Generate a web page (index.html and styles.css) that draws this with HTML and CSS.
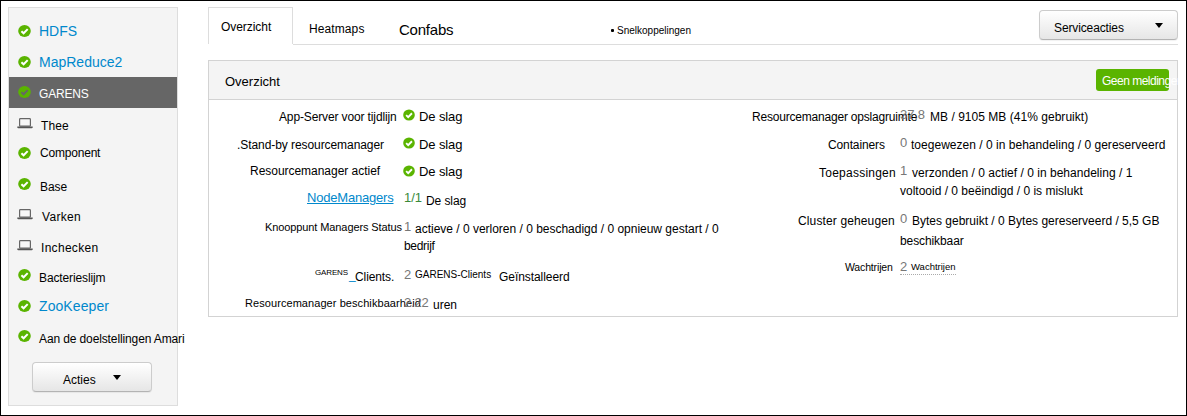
FILE: index.html
```html
<!DOCTYPE html>
<html lang="nl">
<head>
<meta charset="utf-8">
<title>Overzicht</title>
<link rel="stylesheet" href="styles.css">
</head>
<body>
<svg class="defs" aria-hidden="true">
  <symbol id="ok" viewBox="0 0 13 12">
    <ellipse cx="6.5" cy="6" rx="6.3" ry="6" fill="currentColor"/>
    <path class="tick" d="M3.4 6.2 5.6 8.3 9.7 4.1" fill="none" stroke-width="2"/>
  </symbol>
  <symbol id="laptop" viewBox="0 0 16 11">
    <rect x="2.6" y=".6" width="10.8" height="7.6" rx=".8" fill="#f7f7f7" stroke="#666" stroke-width="1.2"/>
    <path d="M.3 8.6H15.7V9.4Q15.7 10.2 14.6 10.2H1.4Q.3 10.2.3 9.4Z" fill="#555"/>
  </symbol>
</svg>
<div class="page">
  <aside class="sidebar">
    <ul class="services">
      <li class="link"><svg class="ok"><use href="#ok"/></svg><span class="hdfs">HDFS</span></li>
      <li class="link"><svg class="ok"><use href="#ok"/></svg><span class="mapreduce">MapReduce2</span></li>
      <li class="active"><svg class="ok"><use href="#ok"/></svg><span class="garens">GARENS</span></li>
      <li><svg class="laptop"><use href="#laptop"/></svg><span class="thee">Thee</span></li>
      <li><svg class="ok"><use href="#ok"/></svg><span class="component">Component</span></li>
      <li><svg class="ok"><use href="#ok"/></svg><span class="base">Base</span></li>
      <li><svg class="laptop"><use href="#laptop"/></svg><span class="varken">Varken</span></li>
      <li><svg class="laptop"><use href="#laptop"/></svg><span class="inchecken">Inchecken</span></li>
      <li><svg class="ok"><use href="#ok"/></svg><span class="slijm">Bacterieslijm</span></li>
      <li class="link"><svg class="ok"><use href="#ok"/></svg><span class="zoo">ZooKeeper</span></li>
      <li><svg class="ok"><use href="#ok"/></svg><span class="amari">Aan de doelstellingen Amari</span></li>
    </ul>
    <button class="btn actions"><span>Acties</span><i class="caret"></i></button>
  </aside>
  <main class="main">
    <nav class="tabs">
      <a class="tab current">Overzicht</a>
      <div class="tab-rest">
        <a class="heatmaps">Heatmaps</a>
        <a class="confabs">Confabs</a>
        <span class="bullet"></span>
        <a class="quick">Snelkoppelingen</a>
        <button class="btn service"><span>Serviceacties</span><i class="caret"></i></button>
      </div>
    </nav>
    <section class="panel">
      <header class="panel-head"><h1>Overzicht</h1><span class="badge">Geen meldingen</span></header>
      <div class="columns">
        <div class="left">
          <div class="row timeline"><span class="label">App-Server voor tijdlijn</span><span class="value"><svg class="ok"><use href="#ok"/></svg><b>De slag</b></span></div>
          <div class="row standby"><span class="label">.Stand-by resourcemanager</span><span class="value"><svg class="ok"><use href="#ok"/></svg><b>De slag</b></span></div>
          <div class="row rmactive"><span class="label">Resourcemanager actief</span><span class="value"><svg class="ok"><use href="#ok"/></svg><b>De slag</b></span></div>
          <div class="row nodes"><a class="label">NodeManagers</a><span class="value"><em>1/1</em><b>De slag</b></span></div>
          <div class="row nodestatus"><span class="label">Knooppunt Managers Status</span><div><span class="value"><em>1</em><b>actieve / 0 verloren / 0 beschadigd / 0 opnieuw gestart / 0</b></span><span class="more">bedrijf</span></div></div>
          <div class="row clients"><span class="label"><small>GARENS</small><u>_</u><b>Clients.</b></span><span class="value"><em>2</em><b class="name">GARENS-Clients</b><b>Geïnstalleerd</b></span></div>
          <div class="row uptime"><span class="label">Resourcemanager beschikbaarheid</span><span class="value"><em>2.22</em><b>uren</b></span></div>
        </div>
        <div class="right">
          <div class="row heap"><span class="label">Resourcemanager opslagruimte</span><span class="value"><em>37.8</em><b>MB / 9105 MB (41% gebruikt)</b></span></div>
          <div class="row containers"><span class="label">Containers</span><span class="value"><em>0</em><b>toegewezen / 0 in behandeling / 0 gereserveerd</b></span></div>
          <div class="row apps"><span class="label">Toepassingen</span><div><span class="value"><em>1</em><b>verzonden / 0 actief / 0 in behandeling / 1</b></span><span class="more">voltooid / 0 beëindigd / 0 is mislukt</span></div></div>
          <div class="row memory"><span class="label">Cluster geheugen</span><div><span class="value"><em>0</em><b>Bytes gebruikt / 0 Bytes gereserveerd / 5,5 GB</b></span><span class="more">beschikbaar</span></div></div>
          <div class="row queues"><span class="label">Wachtrijen</span><span class="value"><em>2</em><b>Wachtrijen</b></span></div>
        </div>
      </div>
    </section>
  </main>
</div>
</body>
</html>
```
FILE: styles.css
```css
* { box-sizing: border-box; }
body { margin: 0; background: #fff; color: #000; font: 12px/16px "Liberation Sans", Arial, sans-serif; }
b, em, i, u { font-weight: normal; font-style: normal; }
.defs { display: none; }
.page { display: flex; align-items: flex-start; width: 1187px; height: 416px; padding: 6px 8px 0 7px; border: 1px solid #000; overflow: hidden; white-space: nowrap; }

/* Status icons */
svg { flex: none; display: block; }
.ok { width: 13px; height: 12px; color: #5ab400; --tick: #fff; }
.tick { stroke: var(--tick); }
.laptop { width: 16px; height: 11px; }

/* Sidebar */
.sidebar { flex: none; width: 170px; height: 399px; padding-top: 8px; background: #f4f4f4; border: 1px solid #ddd; }
.services { list-style: none; margin: 0; padding: 0; }
.services li { display: flex; align-items: flex-start; height: 31px; padding: 9px 0 0 9px; }
.services li:nth-child(even) { height: 30px; }
.services .ok { margin-right: 8px; }
.services .laptop { margin: 1px 6px 0 -1px; }
.services span { margin-top: 1px; }
.services .link span { margin-top: -2px; font-size: 14px; color: #0088cc; }
.services .active { background: #666; color: #fff; }
.active .ok { --tick: #666; }
.services .garens { margin-top: 0; letter-spacing: -.2px; }
.mapreduce { letter-spacing: 0; }
.services .zoo { letter-spacing: .08px; }
.services .thee { margin-left: 2px; letter-spacing: .1px; }
.services .component { margin: -2px 0 0 1px; letter-spacing: -.2px; }
.services .base { margin-left: 1px; letter-spacing: -.1px; }
.services .varken { margin-left: 3px; letter-spacing: .3px; }
.services .inchecken { margin-left: 2px; letter-spacing: .3px; }
.slijm, .amari { letter-spacing: -.12px; }

/* Buttons */
.btn { display: flex; align-items: flex-start; height: 30px; padding: 0; border: 1px solid #ccc; border-bottom-color: #b3b3b3; border-radius: 4px; background: linear-gradient(#fff, #e6e6e6); box-shadow: 0 1px 1px rgba(0,0,0,.06); color: #000; font: inherit; }
.caret { border: 4.5px solid transparent; border-width: 5px 4px 0; border-top-color: #000; }
.actions { width: 120px; margin: 10px 0 0 23px; padding: 9px 0 0 30px; }
.actions .caret { margin: 3px 0 0 17px; }
.service { width: 139px; height: 30px; margin: 3px 0 0 348px; padding: 9px 0 0 14px; letter-spacing: -.12px; }
.service .caret { margin: 3px 0 0 31px; }

/* Tabs */
.main { width: 970px; margin-left: 30px; }
.tabs { display: flex; height: 38px; }
.current { width: 85px; height: 37px; padding: 11px 0 0 12px; border: 1px solid #ddd; border-bottom: 0; letter-spacing: -.05px; }
.tab-rest { display: flex; align-items: flex-start; flex: 1; height: 38px; border-bottom: 1px solid #ddd; }
.heatmaps { margin: 14px 0 0 16px; width: 90px; letter-spacing: .1px; }
.confabs { margin-top: 15px; width: 212px; font-size: 15px; letter-spacing: -.23px; }
.bullet { width: 3px; height: 3px; margin-top: 22px; background: #000; border-radius: 1px; }
.quick { margin: 16px 0 0 3px; width: 74px; font-size: 10px; }

/* Panel */
.panel { height: 257px; margin-top: 15px; border: 1px solid #d3d3d3; }
.panel-head { display: flex; justify-content: space-between; align-items: flex-start; height: 39px; padding: 8px 8px 0 16px; background: #f4f4f4; border-bottom: 1px solid #d3d3d3; }
h1 { margin: 5px 0 0; font: 13px/16px "Liberation Sans", Arial, sans-serif; }
.badge { width: 73px; height: 22px; padding: 4px 0 0 6px; border-radius: 3px; background: #5ab400; color: #fff; letter-spacing: -.5px; }
.columns { display: flex; }
.left { width: 535px; padding-top: 9px; }
.right { padding-top: 7px; }
.row, .value { display: flex; align-items: flex-start; }
.row { height: 28px; }
.label { flex: none; width: 195px; }
.right .label { width: 156px; margin-top: 2px; }
.value em { flex: none; width: 11px; font-size: 13px; color: #777; }
.value b { margin-top: 2px; }
.value .ok { width: 12px; margin-left: -1px; }
.more { display: block; }

.timeline b, .standby b, .rmactive b { margin-left: 4px; font-size: 13px; letter-spacing: -.1px; }
.timeline b, .standby b { margin-top: 0; }
.rmactive b { margin-top: 1px; }
.timeline .label { padding-left: 70px; letter-spacing: -.13px; }
.standby { height: 26px; }
.standby .label { padding-left: 28px; letter-spacing: -.07px; }
.rmactive { height: 26px; }
.rmactive .label { padding-left: 41px; letter-spacing: -.03px; }
.rmactive .ok { margin-top: 2px; }
.nodes { height: 30px; }
.nodes .label { margin-top: 1px; padding-left: 98px; font-size: 13px; letter-spacing: -.2px; color: #0088cc; text-decoration: underline; }
.nodes em { width: 22px; margin-top: 1px; color: #3a8a3a; }
.nodes b { margin-top: 4px; letter-spacing: -.09px; }
.nodestatus { height: 46px; }
.nodestatus .label { padding-left: 56px; font-size: 11px; letter-spacing: -.1px; }
.nodestatus b { letter-spacing: -.01px; }
.nodestatus .more { margin-top: 1px; letter-spacing: -.3px; }
.clients { height: 30px; }
.clients .label { display: flex; padding-left: 106px; }
.clients small { width: 34px; font-size: 8px; letter-spacing: -.15px; }
.clients u { width: 6px; margin-top: 2px; color: #0088cc; text-decoration: none; }
.clients .label b { margin-top: 4px; letter-spacing: -.1px; }
.clients em { margin-top: 2px; }
.clients .value b { margin-top: 4px; letter-spacing: -.06px; }
.clients .value .name { width: 84px; margin-top: 2px; font-size: 10px; letter-spacing: 0; }
.uptime .label { padding-left: 36px; font-size: 11px; letter-spacing: .07px; }
.uptime em { width: 29px; letter-spacing: -.2px; }

.heap .label { padding-left: 8px; letter-spacing: -.2px; }
.heap em { width: 30px; letter-spacing: -.1px; }
.heap b { letter-spacing: .03px; }
.containers .label { padding-left: 84px; letter-spacing: -.12px; }
.containers b { letter-spacing: .02px; }
.apps { height: 48px; }
.apps .label { padding-left: 75px; letter-spacing: .24px; }
.apps em { width: 12px; }
.apps b { letter-spacing: .02px; }
.apps .more { margin-top: 2px; }
.memory { height: 48px; }
.memory .label { padding-left: 54px; letter-spacing: .13px; }
.memory em { width: 12px; }
.memory .more { margin-top: 4px; letter-spacing: -.1px; }
.right .queues .label { margin-top: 0; padding-left: 101px; font-size: 10.5px; letter-spacing: -.15px; }
.queues .value { height: 16px; border-bottom: 1px dotted #aaa; }
.queues b { margin-top: 0; font-size: 9.5px; }
```
